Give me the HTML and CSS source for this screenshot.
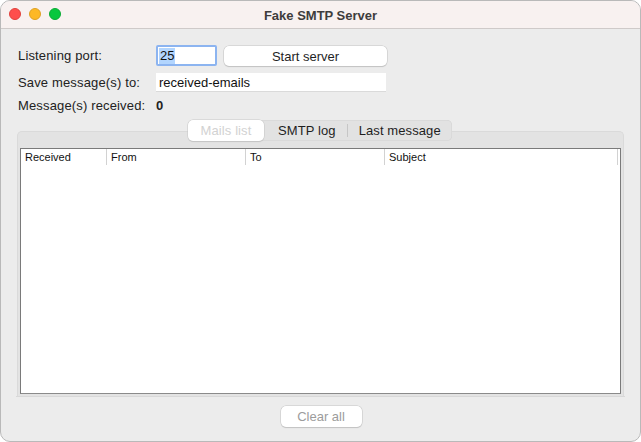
FILE: index.html
```html
<!DOCTYPE html>
<html>
<head>
<meta charset="utf-8">
<link rel="stylesheet" href="styles.css">
</head>
<body>
<div class="window">
  <div class="titlebar">
    <div class="lights">
      <span class="light red"></span>
      <span class="light yellow"></span>
      <span class="light green"></span>
    </div>
    <div class="title">Fake SMTP Server</div>
  </div>
  <div class="content">
    <div class="form">
      <div class="row">
        <label class="lbl">Listening port:</label>
        <div class="port"><span class="sel">25</span></div>
        <button class="btn start">Start server</button>
      </div>
      <div class="row">
        <label class="lbl">Save message(s) to:</label>
        <div class="field save">received-emails</div>
      </div>
      <div class="row">
        <label class="lbl">Message(s) received:</label>
        <span class="count">0</span>
      </div>
    </div>
    <div class="tabarea">
      <div class="tabs">
        <span class="tab active">Mails list</span>
        <span class="tab smtp">SMTP log</span>
        <span class="sep"></span>
        <span class="tab last">Last message</span>
      </div>
      <div class="panel">
        <div class="table">
          <div class="thead">
            <div class="th c1">Received</div>
            <div class="th c2">From</div>
            <div class="th c3">To</div>
            <div class="th c4">Subject</div>
          </div>
        </div>
      </div>
    </div>
    <div class="footer">
      <button class="btn clear">Clear all</button>
    </div>
  </div>
</div>
</body>
</html>
```
FILE: styles.css
```css
* { box-sizing: border-box; }
html, body { margin: 0; padding: 0; background: #ffffff; }
body { width: 641px; height: 442px; overflow: hidden; font-family: "Liberation Sans", Arial, sans-serif; color: #262626; }
.window {
  width: 641px; height: 442px;
  border: 1px solid #b9b9b9;
  border-radius: 10px;
  background: #ececec;
  overflow: hidden;
  display: flex; flex-direction: column;
}
.titlebar {
  height: 28px; flex: none;
  background: #f8f1f0;
  border-bottom: 1px solid #cfcac9;
  position: relative;
  display: flex; align-items: center; justify-content: center;
}
.lights { position: absolute; left: 8px; top: 7px; display: flex; gap: 8px; }
.light { width: 12px; height: 12px; border-radius: 50%; display: block; }
.red { background: #fe4f4c; border: 0.5px solid #e0413c; }
.yellow { background: #fdb826; border: 0.5px solid #dea123; }
.green { background: #08c73e; border: 0.5px solid #0aab34; }
.title { font-weight: bold; font-size: 13px; color: #3e3c3c; margin-top: 1px; }
.content { flex: 1; display: flex; flex-direction: column; padding: 16px 16px 0 16px; }
.form { display: flex; flex-direction: column; gap: 7px; padding-left: 1px; }
.row { display: flex; align-items: center; height: 21px; }
.row:nth-child(2) { height: 19px; }
.row:nth-child(3) { height: 18px; margin-top: -3px; }
.lbl { width: 138px; font-size: 13px; color: #222; letter-spacing: 0.15px; }
.port {
  width: 61px; height: 21px; background: #fff;
  border: 2px solid #8cb4f0; border-radius: 2px;
  display: flex; align-items: center; padding-left: 1px;
  font-size: 13px; color: #111;
}
.sel { background: #b2d5fe; padding: 0 1px; line-height: 16px; }
.btn {
  font-family: inherit; font-size: 13px; color: #1f1f1f;
  background: #fff; border: none; border-radius: 5px;
  box-shadow: 0 0 0 0.5px #c4c4c4, 0 1px 1px rgba(0,0,0,0.18);
}
.start { width: 163px; height: 20px; margin-left: 7px; margin-top: 1px; }
.field { background: #fff; height: 19px; font-size: 13px; padding-left: 3px; line-height: 19px; color: #111; border-bottom: 1px solid #dadada; }
.save { width: 230px; }
.count { font-weight: bold; font-size: 13px; color: #222; }
.tabarea { position: relative; margin-top: 6px; flex: none; }
.tabs {
  position: absolute; left: 171px; top: 0; z-index: 2;
  height: 21px; display: flex; align-items: center;
  background: #e2e2e2; border-radius: 5px;
  box-shadow: inset 0 0 0 0.5px #d2d2d2;
}
.tab { font-size: 13px; color: #1e1e1e; padding: 0 10px; height: 21px; line-height: 21px; letter-spacing: 0.1px; }
.tab.active {
  background: #fff; color: #d2d2d2; border-radius: 5px;
  box-shadow: 0 0 0 0.5px #c8c8c8, 0 1px 1px rgba(0,0,0,0.15);
  width: 76px; text-align: center; padding: 0;
}
.tab.smtp { padding: 0 11px 0 14px; }
.tab.last { padding: 0 11px 0 11px; }
.sep { width: 1px; height: 13px; background: #c6c6c6; }
.panel {
  margin-top: 11px;
  height: 265px;
  background: #e3e3e3;
  border: 1px solid #dadada;
  border-bottom: none;
  border-radius: 5px 5px 0 0;
  padding: 16px 2px 0 2px;
}
.table {
  height: 246px; background: #fff;
  border: 1px solid #7a7a7a;
  border-bottom-color: #8a8a8a;
}
.thead { display: flex; height: 16px; align-items: center; }
.th { font-size: 11px; color: #111; padding-left: 4px; height: 16px; line-height: 16px; border-right: 1px solid #d2d2d2; }
.c1 { width: 86px; }
.c2 { width: 139px; }
.c3 { width: 139px; }
.c4 { width: 233px; }
.footer { flex: 1; display: flex; justify-content: center; align-items: flex-start; padding-top: 9px; border-top: 1px solid #d8d8d8; margin: 0 -1px; background: #ececec; }
.clear { width: 81px; height: 21px; color: #9c9c9c; margin-left: 1px; }
```
